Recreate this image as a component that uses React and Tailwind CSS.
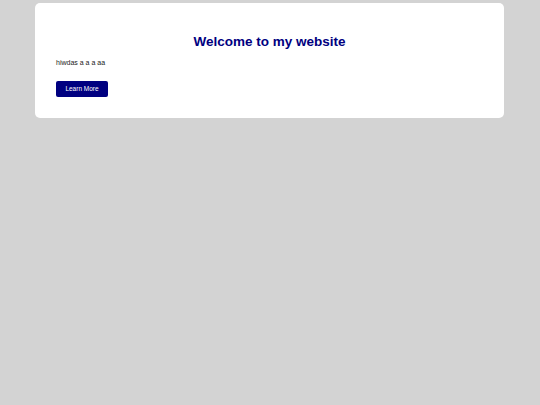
import React from 'react';

function App() {
  return (
    <div className="min-h-screen w-full bg-[#d3d3d3] pt-[3px] font-['Liberation_Sans',Arial,sans-serif]">
      <div className="ml-[35px] w-[469px] h-[115px] bg-white rounded-[5px] px-[21px] pt-[29px]">
        <h1 className="text-center text-[13.5px] leading-[20px] font-bold text-[#000080]">
          Welcome to my website
        </h1>
        <p className="mt-[6px] text-[7px] leading-[10px] text-[#222]">hiwdas a a a aa</p>
        <button className="mt-[13px] w-[52px] h-[16px] bg-[#000080] text-white text-[6.5px] rounded-[2px]">
          Learn More
        </button>
      </div>
    </div>
  );
}

export default App;
